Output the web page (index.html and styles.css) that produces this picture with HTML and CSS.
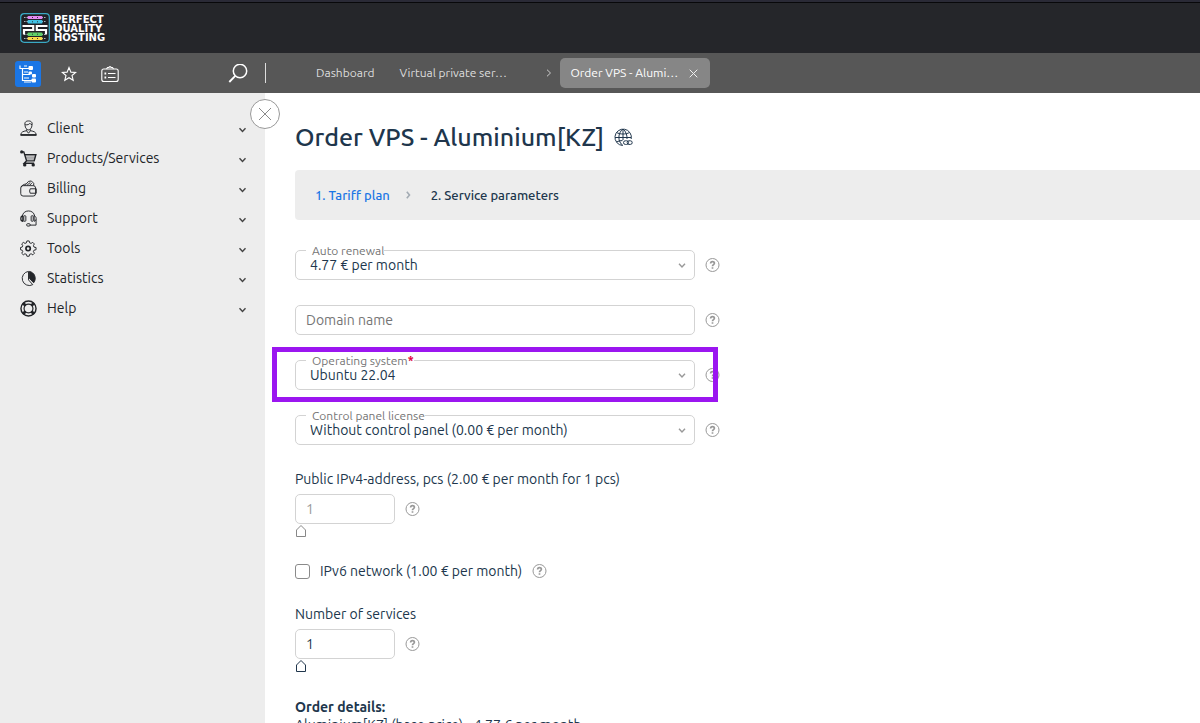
FILE: index.html
```html
<!DOCTYPE html>
<html lang="en">
<head>
<meta charset="utf-8">
<title>Order VPS - Aluminium[KZ]</title>
<link rel="stylesheet" href="styles.css">
</head>
<body>
<svg class="sprite" aria-hidden="true">
  <symbol id="chevron" viewBox="0 0 8 6"><path d="M1 1.2 4 4.4 7 1.2" fill="none" stroke="currentColor" stroke-width="1.4"/></symbol>
  <symbol id="question" viewBox="0 0 15 15"><circle cx="7.500" cy="7" r="6.500" fill="none" stroke="currentColor"/><path d="M5.600 5.600C5.600 3 9.400 3 9.400 5.300 9.400 6.700 7.500 6.500 7.500 8.300M7.500 9.300V10.700" fill="none" stroke="currentColor" stroke-width="1.700"/></symbol>
</svg>

<header class="brandbar">
  <a class="brand" href="#">
    <svg class="brand-mark" width="30" height="30" viewBox="0 0 30 30" aria-hidden="true">
      <rect x=".7" y=".7" width="28.600" height="28.600" rx="3.500" fill="#202126" stroke="#3aa9c4" stroke-width="1.200"/>
      <path d="M4 4.500H26M4 8.500H26M4 21.500H26M4 25.500H26" stroke="#a9b4bd" stroke-width="1" stroke-dasharray="1.500 1"/>
      <rect x="7.500" y="3" width="15" height="3" rx="1" fill="#e28af2"/>
      <rect x="7.500" y="7" width="15" height="3.500" rx="1" fill="#42c3e6"/>
      <rect x="7.500" y="19.500" width="15" height="3.500" rx="1" fill="#5fd068"/>
      <rect x="7.500" y="24" width="15" height="3" rx="1" fill="#f6d84a"/>
      <path d="M12 4.500h1M17 4.500h1M12 8.800h1M17 8.800h1M12 21.200h1M17 21.200h1M12 25.500h1M17 25.500h1" stroke="#333" stroke-width="1"/>
      <path d="M2.500 13H13.200V17H4V21.500M27.500 13H16.800V17H26V21.500" fill="none" stroke="#fff" stroke-width="2.200"/>
    </svg>
    <span class="brand-name">PERFECT<br>QUALITY<br>HOSTING</span>
  </a>
</header>

<nav class="toolbar" aria-label="Tabs">
  <div class="tools">
    <button class="tool tool-active" type="button" aria-label="Menu tree">
      <svg width="18" height="18" viewBox="0 0 18 18" fill="none" stroke="#fff"><path d="M1 .5V3.500H10M3.500 3.500V15.500H13M3.500 9.500H11" stroke-width="1.200"/><path d="M5 1H8M5 7H9M5 13H10M5 17H12" stroke-width="1"/><g fill="#fff" stroke="none"><rect x="9.500" y="1" width="4.500" height="4" rx="1"/><rect x="9.500" y="6.500" width="3.500" height="3" rx="1"/><rect x="13" y="9" width="4" height="3.500" rx="1"/><rect x="12.500" y="13.500" width="4.500" height="4" rx="1"/></g></svg>
    </button>
    <button class="tool" type="button" aria-label="Favorites">
      <svg width="16" height="16" viewBox="0 0 16 16"><path d="M8 1.500 9.900 6.100 14.700 6.400 11 9.500 12.200 14.300 8 11.700 3.800 14.300 5 9.500 1.300 6.400 6.100 6.100Z" fill="none" stroke="#fff" stroke-width="1.100"/></svg>
    </button>
    <button class="tool" type="button" aria-label="Notes">
      <svg width="18" height="18" viewBox="0 0 18 18" fill="none" stroke="#fff" stroke-width="1.100"><rect x=".8" y="4" width="16.400" height="12.500" rx="2"/><path d="M5.500 4 6.500 2.500H8a1 1 0 0 1 2 0H11.500L12.500 4M7 8.500H14.500M7 12.500H14.500"/><path d="M3.500 8.500H5.200M3.500 12.500H5.200" stroke-width="1.800"/></svg>
    </button>
    <button class="tool tool-search" type="button" aria-label="Search">
      <svg width="20" height="20" viewBox="0 0 20 20" fill="none" stroke="#fff" stroke-width="1.500"><circle cx="12" cy="7" r="6.700"/><path d="M7.300 11.800 1.300 18" stroke-width="1.800"/></svg>
    </button>
  </div>
  <div class="tabs">
    <a class="tab" href="#">Dashboard</a>
    <a class="tab tab-wide" href="#">Virtual private ser…</a>
    <svg class="tab-arrow" width="6" height="8" viewBox="0 0 6 8"><path d="M1 .7 4.500 4 1 7.300" fill="none" stroke="#ccc"/></svg>
    <div class="tab-current">
      <a href="#">Order VPS - Alumi…</a>
      <button class="tab-close" type="button" aria-label="Close tab"><svg width="9" height="9" viewBox="0 0 9 9"><path d="M.7.7 8.300 8.300M8.300.7.7 8.300" stroke="#f0f0f0"/></svg></button>
    </div>
  </div>
</nav>

<div class="page">
  <aside class="sidebar">
    <button class="collapse" type="button" aria-label="Hide menu"><svg width="14" height="14" viewBox="0 0 14 14"><path d="M1 1 13 13M13 1 1 13" stroke="#8a8a8a"/></svg></button>
    <ul class="menu">
      <li><button class="menu-item" type="button"><svg class="menu-icon" viewBox="0 0 18 18"><path d="M5.300 5.500C4.500 1.800 7 1 9 1s4.500.8 3.700 4.500C12.500 8.500 11 10.500 9 10.500S5.500 8.500 5.300 5.500ZM5.500 5C8 5.500 10 4.500 10.500 3.500 11 4.500 12 5 12.700 5M7 10v1.500L9 14l2-2.500V10M7 11.300C3 12 1 13 .8 15.500H17.200C17 13 15 12 11 11.300"/><path d="M.5 16H17.500" stroke-width="1.600"/></svg><span>Client</span><svg class="menu-chevron"><use href="#chevron"/></svg></button></li>
      <li><button class="menu-item" type="button"><svg class="menu-icon" viewBox="0 0 18 18"><path d="M1 2H4L7 11.500H15L16.800 5H5M7 11.500 4.500 14H15" stroke-width="1.500"/><path d="M6 7.500H16M6.500 9.500H15.500" stroke-width=".6"/><g fill="currentColor" stroke="none"><circle cx="1.800" cy="2" r="1.700"/><circle cx="5" cy="15.800" r="1.800"/><circle cx="14" cy="15.800" r="1.800"/></g></svg><span>Products/Services</span><svg class="menu-chevron"><use href="#chevron"/></svg></button></li>
      <li><button class="menu-item" type="button"><svg class="menu-icon" viewBox="0 0 18 18"><rect x=".8" y="6" width="15.700" height="11" rx="2.500"/><path d="M1.200 7.500C2 5.500 4 5 6 4M5 6 9 1.500 12 1 14.500 3.500V6M7.500 5.500 11 2.500M10 5.500 12.500 3.500M10.800 9.300H17.200V14H10.800Q9.500 11.700 10.800 9.300Z"/></svg><span>Billing</span><svg class="menu-chevron"><use href="#chevron"/></svg></button></li>
      <li><button class="menu-item" type="button"><svg class="menu-icon" viewBox="0 0 18 18"><path d="M2.500 6.500C3 3 5.500 1 9 1S15 3 15.500 6.500"/><path d="M3.300 6C.2 6.500 0 11.500 3 12V6" stroke-width="1.300"/><path d="M14.700 6C17.800 6.500 18 11.500 15 12V6M17 10V16H10.500"/><rect x="4" y="6" width="2.200" height="6" rx="1"/><rect x="11.800" y="6" width="2.200" height="6" rx="1"/><rect x="7" y="14.500" width="3.800" height="2.500" rx="1.200"/></svg><span>Support</span><svg class="menu-chevron"><use href="#chevron"/></svg></button></li>
      <li><button class="menu-item" type="button"><svg class="menu-icon" viewBox="0 0 18 18"><path d="M7.300 1H9.700L10.200 3 11.700 3.600 13.500 2.500 15.200 4.200 14.200 6 14.800 7.500 17 8V10.300L14.800 10.800 14.200 12.300 15.300 14 13.600 15.700 11.800 14.600 10.200 15.200 9.700 17.200H7.300L6.800 15.200 5.200 14.600 3.500 15.700 1.800 14 2.900 12.300 2.300 10.800.5 10.300V8L2.300 7.500 2.900 6 1.800 4.200 3.500 2.500 5.300 3.600 6.800 3Z"/><circle cx="8.600" cy="9.100" r="2.300" stroke-width="1.800"/></svg><span>Tools</span><svg class="menu-chevron"><use href="#chevron"/></svg></button></li>
      <li><button class="menu-item" type="button"><svg class="menu-icon" viewBox="0 0 18 18"><path d="M9 1.500A7.500 7.500 0 1 0 13.500 15.500L9 10.500Z"/><path d="M10 1.500A7.500 7.500 0 0 1 14.500 13.500L10 9Z" fill="currentColor"/></svg><span>Statistics</span><svg class="menu-chevron"><use href="#chevron"/></svg></button></li>
      <li><button class="menu-item" type="button"><svg class="menu-icon" viewBox="0 0 18 18"><circle cx="9" cy="9" r="8" stroke-width="1.500"/><circle cx="9" cy="9" r="4.700" stroke-width="1.300"/><path d="M3.200 3.200 6 6M14.800 3.200 12 6M3.200 14.800 6 12M14.800 14.800 12 12" stroke-width="3"/></svg><span>Help</span><svg class="menu-chevron"><use href="#chevron"/></svg></button></li>
    </ul>
  </aside>

  <main class="content">
    <div class="title-row">
      <h1 class="title">Order VPS - Aluminium[KZ]</h1>
      <a class="permalink" href="#" aria-label="Link to this page"><svg width="19" height="19" viewBox="0 0 19 19" fill="none" stroke="#20364c" stroke-width="1"><path d="M8.500 17.500A8.200 8.200 0 1 1 17.200 11M9 1C3.500 5 3.500 14 9 17.500M9 1C12 3.500 13.200 7 13 11M2.500 4.500C6 6.500 12 6.500 15.500 4.500M1 9.500H17M2.300 14C4.500 13 6.500 12.600 8.500 12.600M9 1V12"/><rect x="9.500" y="12.800" width="5" height="3.600" rx="1.800"/><rect x="13.200" y="12.800" width="5" height="3.600" rx="1.800"/></svg></a>
    </div>

    <ol class="steps">
      <li><a href="#">1. Tariff plan</a></li>
      <li class="step-arrow" aria-hidden="true"><svg width="5" height="8" viewBox="0 0 5 8"><path d="M.8.800 3.500 4 .8 7.200" fill="none" stroke="#a3abb3" stroke-width="1.600"/></svg></li>
      <li aria-current="step">2. Service parameters</li>
    </ol>

    <form class="order-form">
      <div class="row">
        <div class="field">
          <select class="control" id="renewal"><option>4.77 € per month</option></select>
          <label class="float-label" for="renewal">Auto renewal</label>
          <svg class="field-chevron"><use href="#chevron"/></svg>
        </div>
        <button class="help" type="button" aria-label="Help"><svg><use href="#question"/></svg></button>
      </div>
      <div class="row">
        <div class="field"><input class="control" type="text" placeholder="Domain name" aria-label="Domain name"></div>
        <button class="help" type="button" aria-label="Help"><svg><use href="#question"/></svg></button>
      </div>
      <div class="row row-marked">
        <div class="field">
          <select class="control" id="os"><option>Ubuntu 22.04</option></select>
          <label class="float-label" for="os">Operating system<b class="required">*</b></label>
          <svg class="field-chevron"><use href="#chevron"/></svg>
        </div>
        <button class="help" type="button" aria-label="Help"><svg><use href="#question"/></svg></button>
      </div>
      <div class="row">
        <div class="field">
          <select class="control" id="panel"><option>Without control panel (0.00 € per month)</option></select>
          <label class="float-label" for="panel">Control panel license</label>
          <svg class="field-chevron"><use href="#chevron"/></svg>
        </div>
        <button class="help" type="button" aria-label="Help"><svg><use href="#question"/></svg></button>
      </div>

      <div class="amount">
        <label for="ipv4">Public IPv4-address, pcs (2.00 € per month for 1 pcs)</label>
        <div class="row">
          <input class="control control-small" id="ipv4" type="text" value="1" disabled>
          <button class="help" type="button" aria-label="Help"><svg><use href="#question"/></svg></button>
        </div>
        <input class="slider" type="range" min="1" max="8" value="1" disabled aria-label="IPv4 addresses">
      </div>

      <div class="row check-row">
        <input class="check" id="ipv6" type="checkbox">
        <label for="ipv6">IPv6 network (1.00 € per month)</label>
        <button class="help" type="button" aria-label="Help"><svg><use href="#question"/></svg></button>
      </div>

      <div class="amount">
        <label for="count">Number of services</label>
        <div class="row">
          <input class="control control-small" id="count" type="text" value="1">
          <button class="help" type="button" aria-label="Help"><svg><use href="#question"/></svg></button>
        </div>
        <input class="slider" type="range" min="1" max="10" value="1" aria-label="Service count">
      </div>

      <div class="details">
        <strong>Order details:</strong>
        <p>Aluminium[KZ] (base price) - 4.77 € per month</p>
      </div>
    </form>
  </main>
</div>
</body>
</html>
```
FILE: styles.css
```css
* { box-sizing: border-box; }

body {
  margin: 0;
  height: 100vh;
  display: flex;
  flex-direction: column;
  overflow: hidden;
  background: #fff;
  color: #20364c;
  font: 14px/20px Ubuntu, "Noto Sans", sans-serif;
}

button, input, select { font: inherit; color: inherit; }
button { padding: 0; border: 0; background: none; cursor: pointer; }
a { color: inherit; text-decoration: none; }
svg { display: block; flex: none; }
.sprite { position: absolute; width: 0; height: 0; }

.brandbar {
  flex: none;
  height: 53px;
  padding: 11px 20px 0;
  border-top: 2px solid #2a2a36;
  background: #25262a;
  box-shadow: inset 0 1px #08080a;
}
.brand { display: inline-flex; align-items: center; gap: 4px; color: #fff; }
.brand-name { font: bold 10px/9px "DejaVu Sans", sans-serif; }

.toolbar { flex: none; display: flex; height: 40px; background: #575757; }
.tools {
  display: flex;
  align-items: center;
  gap: 15px;
  width: 265px;
  padding: 1px 14px 0 15px;
}
.tool {
  display: flex;
  align-items: center;
  justify-content: center;
  width: 26px;
  height: 26px;
  border-radius: 3px;
}
.tool-active { background: #1b76e5; }
.tool-search { margin-left: auto; }
.tabs {
  display: flex;
  align-items: center;
  flex: 1;
  color: #ddd;
  font-size: 12px;
  line-height: 22px;
}
.tabs::before { content: ""; width: 1px; height: 20px; margin-right: 50px; background: #ddd; }
.tab { margin-right: 25px; }
.tab-wide { width: 122px; white-space: nowrap; }
.tab-arrow { margin-right: 8px; }
.tab-current {
  display: flex;
  align-items: center;
  justify-content: space-between;
  width: 150px;
  height: 30px;
  padding: 0 12px 0 10px;
  border-radius: 5px;
  background: #868686;
  color: #fff;
  white-space: nowrap;
}

.page { flex: 1; display: flex; min-height: 0; }
.sidebar { position: relative; flex: none; width: 265px; padding-top: 20px; background: #ededed; }
.collapse {
  position: absolute;
  top: 6px;
  right: -15px;
  display: flex;
  align-items: center;
  justify-content: center;
  width: 30px;
  height: 30px;
  border: 1px solid #999;
  border-radius: 50%;
  background: #fff;
}
.menu { margin: 0; padding: 0; list-style: none; color: #222428; }
.menu-item {
  display: flex;
  align-items: center;
  gap: 10px;
  width: 100%;
  height: 30px;
  padding: 0 18px 0 20px;
}
.menu-icon { width: 17px; height: 17px; fill: none; stroke: currentColor; }
.menu-chevron { width: 9px; height: 6px; margin: 4px 0 0 auto; color: #444; }

.content { flex: 1; min-width: 0; padding-left: 30px; overflow: hidden; }
.title-row { display: flex; align-items: center; gap: 10px; padding: 24px 0 13px; }
.title { margin: 0; font-size: 25px; line-height: 40px; font-weight: 550; }
.steps {
  display: flex;
  align-items: center;
  height: 50px;
  margin: 0;
  padding: 0 20px;
  border-radius: 4px 0 0 4px;
  background: #ededed;
  list-style: none;
  font-size: 13px;
  font-weight: 500;
}
.steps a { color: #1b76e5; }
.step-arrow { margin: 0 20px 0 16px; }

.order-form { padding-top: 30px; }
.row { display: flex; align-items: center; gap: 10px; width: fit-content; }
.order-form > .row { margin-bottom: 25px; }
.field { position: relative; width: 400px; }
.control {
  display: block;
  width: 100%;
  height: 30px;
  padding: 0 10px;
  border: 1px solid #d3d3d3;
  border-radius: 5px;
  background: #fff;
  appearance: none;
}
select.control { padding-left: 14px; }
.control::placeholder { color: #757575; }
.control:disabled { color: #999; }
.control-small { width: 100px; }
.float-label {
  position: absolute;
  top: -6px;
  left: 11px;
  padding-left: 6px;
  background: #fff;
  color: #757575;
  font-size: 12px;
  line-height: 14px;
}
.required { color: #e0003c; }
.field-chevron { position: absolute; top: 12px; right: 9px; width: 8px; height: 7px; color: #999; pointer-events: none; }
.help { color: #999; }
.help svg { width: 15px; height: 15px; }

.row-marked { position: relative; }
.row-marked::after {
  content: "";
  position: absolute;
  inset: -13px 2px -12px -23px;
  border: 5px solid #9b16f0;
  pointer-events: none;
}

.amount label { display: block; margin-bottom: 6px; line-height: 18px; }
.slider {
  display: block;
  width: 100px;
  height: 14px;
  margin: 0;
  appearance: none;
  background: none;
}
.slider::-webkit-slider-thumb {
  appearance: none;
  width: 12px;
  height: 14px;
  background: url("data:image/svg+xml,%3Csvg xmlns='http://www.w3.org/2000/svg' width='12' height='14'%3E%3Cpath d='M1.500 6 6 1.500 10.500 6V12.500H1.500Z' fill='white' stroke='%2320364c'/%3E%3C/svg%3E");
}
.slider:disabled::-webkit-slider-thumb {
  background: url("data:image/svg+xml,%3Csvg xmlns='http://www.w3.org/2000/svg' width='12' height='14'%3E%3Cpath d='M1.500 6 6 1.500 10.500 6V12.500H1.500Z' fill='white' stroke='%23888'/%3E%3C/svg%3E");
}
.order-form > .check-row { margin: 23px 0 24px; }
.check {
  width: 15px;
  height: 15px;
  margin: 0;
  border: 1px solid #8a8a8a;
  border-radius: 3px;
  background: #fff;
  appearance: none;
}
.check:checked { background: #1b76e5; }
.details { margin-top: 25px; }
.details strong { display: block; line-height: 18px; }
.details p { margin: 0; line-height: 18px; white-space: nowrap; }
```
